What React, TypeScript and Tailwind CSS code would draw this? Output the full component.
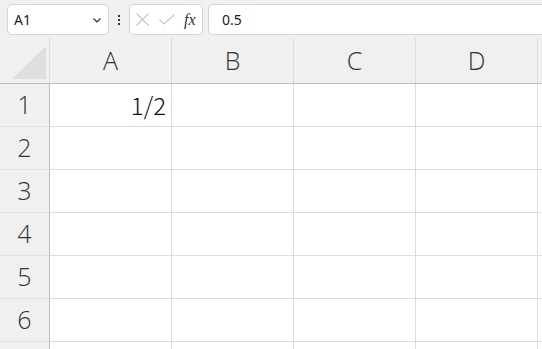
import React from "react";

const cols = ["A", "B", "C", "D", ""];
const rows = [1, 2, 3, 4, 5, 6, 7];

export default function App() {
  return (
    <div className="w-[542px] h-[349px] overflow-hidden bg-[#f0f0f0] relative" style={{ fontFamily: "'Segoe UI', 'Open Sans', 'Noto Sans', sans-serif" }}>
      {/* toolbar */}
      <div className="h-[38px] flex items-start pt-[4px] pl-[7px]">
        <div className="w-[102px] h-[31px] bg-white border border-[#d4d4d4] rounded-[5px] flex items-center pl-[6px] pr-[4px] justify-between">
          <span className="text-[14px] text-[#222]" style={{ fontFamily: "'Noto Sans', sans-serif" }}>A1</span>
          <svg width="12" height="12" viewBox="0 0 12 12" className="mr-[1px]">
            <path d="M2.5 4.5 L6 8 L9.5 4.5" fill="none" stroke="#333" strokeWidth="1.2" />
          </svg>
        </div>
        <div className="w-[20px] h-[31px] flex flex-col items-center justify-center gap-[2px]">
          <div className="w-[2px] h-[2px] bg-[#333]" />
          <div className="w-[2px] h-[2px] bg-[#333]" />
          <div className="w-[2px] h-[2px] bg-[#333]" />
        </div>
        <div className="w-[74px] h-[31px] bg-white border border-[#d4d4d4] rounded-[5px] flex items-center pl-[5px]">
          <svg width="13" height="13" viewBox="0 0 13 13" className="ml-[1px]">
            <path d="M0.5 0.5 L12.5 12.5 M12.5 0.5 L0.5 12.5" stroke="#c6c6c6" strokeWidth="1.1" />
          </svg>
          <svg width="16" height="11" viewBox="0 0 16 11" className="ml-[10px]">
            <path d="M0.5 5.5 L5 10 L15.5 0.5" fill="none" stroke="#c6c6c6" strokeWidth="1.1" />
          </svg>
          <span className="ml-[9px] text-[16px] italic text-[#333]" style={{ fontFamily: "'Liberation Serif', serif" }}>
            fx
          </span>
        </div>
        <div className="ml-[5px] flex-1 h-[31px] bg-white border border-r-0 border-[#d4d4d4] rounded-l-[5px] flex items-center pl-[13px]">
          <span className="text-[14px] text-[#222]" style={{ fontFamily: "'Noto Sans', sans-serif" }}>0.5</span>
        </div>
      </div>

      {/* header row */}
      <div className="flex h-[46px] border-b border-[#bdbdbd]">
        <div className="w-[50px] shrink-0 relative border-r border-[#dcdcdc]">
          <svg width="34" height="33" viewBox="0 0 34 33" className="absolute left-[12px] top-[8px]">
            <path d="M34 0 L34 33 L0 33 Z" fill="#dfdfdf" />
          </svg>
        </div>
        {cols.map((c, i) => (
          <div
            key={i}
            className="w-[122px] shrink-0 border-r border-[#dcdcdc] flex items-center justify-center text-[25px] font-light text-[#333]"
            style={{ fontFamily: "'Open Sans', sans-serif" }}
          >
            {c}
          </div>
        ))}
      </div>

      {/* rows */}
      {rows.map((r) => (
        <div key={r} className="flex h-[43px]">
          <div
            className="w-[50px] shrink-0 border-r border-[#bdbdbd] border-b border-b-[#e0e0e0] flex items-center justify-center text-[25px] font-light text-[#333]"
            style={{ fontFamily: "'Open Sans', sans-serif" }}
          >
            {r <= 6 ? r : ""}
          </div>
          {cols.map((c, i) => (
            <div
              key={i}
              className="w-[122px] shrink-0 bg-white border-r border-b border-[#dcdcdc] flex items-center justify-end pr-[5px] text-[24px] font-light text-[#111]"
              style={{ fontFamily: "'Noto Sans CJK JP', 'Noto Sans', sans-serif" }}
            >
              {r === 1 && i === 0 ? "1/2" : ""}
            </div>
          ))}
        </div>
      ))}
    </div>
  );
}
